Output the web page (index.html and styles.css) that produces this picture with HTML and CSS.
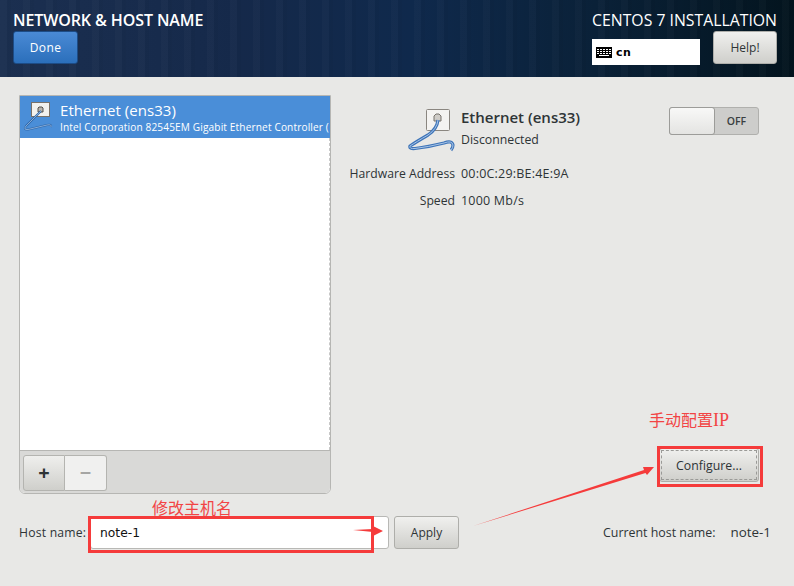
FILE: index.html
```html
<!DOCTYPE html>
<html lang="en">
<head>
<meta charset="utf-8">
<title>Network &amp; Host Name</title>
<link rel="stylesheet" href="styles.css">
</head>
<body>
<div class="page">
  <header class="topbar">
    <div class="top-left">
      <h1 class="spoke-title">NETWORK &amp; HOST NAME</h1>
      <button class="btn-done">Done</button>
    </div>
    <div class="top-right">
      <div class="product">CENTOS 7 INSTALLATION</div>
      <div class="top-controls">
        <div class="layout-box">
          <svg class="kbd" width="16" height="11" viewBox="0 0 16 11"><rect width="16" height="11" fill="#000"/><g fill="#fff"><rect x="1" y="2" width="2" height="1"/><rect x="4" y="2" width="2" height="1"/><rect x="7" y="2" width="2" height="1"/><rect x="10" y="2" width="2" height="1"/><rect x="13" y="2" width="2" height="1"/><rect x="1" y="4" width="2" height="1"/><rect x="4" y="4" width="2" height="1"/><rect x="7" y="4" width="2" height="1"/><rect x="10" y="4" width="2" height="1"/><rect x="13" y="4" width="2" height="1"/><rect x="1" y="6" width="2" height="1"/><rect x="4" y="6" width="2" height="1"/><rect x="7" y="6" width="2" height="1"/><rect x="10" y="6" width="2" height="1"/><rect x="13" y="6" width="2" height="1"/><rect x="3" y="8" width="10" height="1"/></g></svg>
          <span class="layout-name">cn</span>
        </div>
        <button class="btn btn-help">Help!</button>
      </div>
    </div>
  </header>

  <main class="content">
    <div class="columns">
      <section class="device-panel">
        <div class="device-row">
          <svg class="device-icon" width="32" height="32" viewBox="0 0 32 32">
            <rect x="8.5" y="1.5" width="18" height="14" fill="#f2f1ee" stroke="#77716a"/>
            <path d="M15 11V7l1-1h3l1 1v4z" fill="#b9b5ae" stroke="#55504a"/>
            <path d="M18 10L3 25Q0 29 5 28.5L24 24Q29 23 28 26" fill="none" stroke="#2f66a8" stroke-width="2"/>
            <path d="M18 10L3 25Q0 29 5 28.5L24 24Q29 23 28 26" fill="none" stroke="#a8c7ea" stroke-width=".7"/>
          </svg>
          <div class="device-text">
            <div class="device-name">Ethernet (ens33)</div>
            <div class="device-desc">Intel Corporation 82545EM Gigabit Ethernet Controller (</div>
          </div>
        </div>
        <div class="device-list-empty"></div>
        <div class="device-tools">
          <div class="tool-group">
            <button class="tool tool-add">+</button>
            <button class="tool tool-remove">−</button>
          </div>
        </div>
      </section>

      <section class="detail-panel">
        <div class="detail-head">
          <svg class="detail-icon" width="48" height="48" viewBox="0 0 48 48">
            <rect x="18.5" y="2.5" width="23" height="21" rx="1" fill="#f4f3f1" stroke="#8a8680"/>
            <path d="M26 14V9l2-2h3l2 2v5z" fill="#cfccc7" stroke="#77726c"/>
            <path d="M30 13Q29 22 20 28Q8 35 2 39Q1 42 7 41.5Q20 40 36 36Q44 33 45 38Q45 41 43 43" fill="none" stroke="#3e74b8" stroke-width="3.2"/>
            <path d="M30 13Q29 22 20 28Q8 35 2 39Q1 42 7 41.5Q20 40 36 36Q44 33 45 38Q45 41 43 43" fill="none" stroke="#a9c6e8" stroke-width="1"/>
          </svg>
          <div class="detail-title">
            <div class="detail-name">Ethernet (ens33)</div>
            <div class="detail-state">Disconnected</div>
          </div>
          <div class="switch"><span class="switch-knob"></span><span class="switch-label">OFF</span></div>
        </div>
        <dl class="props">
          <dt>Hardware Address</dt><dd>00:0C:29:BE:4E:9A</dd>
          <dt>Speed</dt><dd>1000 Mb/s</dd>
        </dl>
        <div class="detail-actions">
          <button class="btn btn-configure"><span class="focus-ring">Configure...</span></button>
        </div>
      </section>
    </div>

    <div class="host-row">
      <label class="host-label">Host name:</label>
      <input class="host-input" value="note-1">
      <button class="btn btn-apply">Apply</button>
      <div class="current-host"><span>Current host name:</span><span class="current-value">note-1</span></div>
    </div>
  </main>

  <div class="note note-host">修改主机名</div>
  <div class="note note-ip">手动配置<span class="note-latin">IP</span></div>
  <div class="mark mark-host"></div>
  <div class="mark mark-configure"></div>
  <svg class="arrows" width="794" height="586" viewBox="0 0 794 586">
    <polygon points="473,526 644,470 643,467 654,467 647,475 645.5,473" fill="#f53b3b"/>
    <polygon points="353,530 373,529 373,526 383,531 373,536 373,532" fill="#f53b3b"/>
  </svg>
</div>
</body>
</html>
```

FILE: styles.css
```css
* { box-sizing: border-box; }
html, body { margin: 0; padding: 0; }
body { font-family: "Open Sans", "Noto Sans", sans-serif; color: #2e3436; background: #e8e8e6; }
.page { position: relative; width: 794px; height: 586px; overflow: hidden; display: flex; flex-direction: column; }
button { font-family: inherit; margin: 0; }

.topbar {
  height: 77px; flex: none; display: flex; justify-content: space-between;
  padding: 10px 17px 0 13px;
  background:
    repeating-linear-gradient(90deg, rgba(255,255,255,.018) 0 7px, rgba(0,0,0,.03) 7px 11px, rgba(255,255,255,0) 11px 23px),
    linear-gradient(90deg, #1b2f50 0%, #15294a 30%, #0f294c 52%, #0a2138 75%, #03141e 100%);
}
.spoke-title { margin: 0; font-size: 16px; line-height: 21px; font-weight: 600; color: #fff; letter-spacing: -.1px; white-space: nowrap; }
.btn-done {
  display: block; width: 65px; height: 33px; padding: 0;
  border: 1px solid #1d4c86; border-radius: 3px; color: #fff; font-size: 12px; letter-spacing: .4px;
  background: linear-gradient(#4a8ad5, #2b6fbb);
}
.top-right { display: flex; flex-direction: column; align-items: flex-end; }
.product { font-size: 15.8px; line-height: 21px; color: #fff; white-space: nowrap; }
.top-controls { display: flex; align-items: flex-start; gap: 13px; }
.layout-box { width: 108px; height: 26px; margin-top: 8px; background: #fff; display: flex; align-items: center; padding: 1px 0 0 4px; gap: 4px; }
.kbd { flex: none; }
.layout-name { font-family: "DejaVu Sans", sans-serif; font-weight: 700; font-size: 11px; color: #000; letter-spacing: .6px; }
.btn {
  border: 1px solid #aeaeaa; border-radius: 3px; color: #2e3436; font-size: 12px; padding: 0;
  background: linear-gradient(#f0f0ee, #cfcfcb);
}
.btn-help { width: 64px; height: 33px; }

.content { flex: 1; display: flex; flex-direction: column; padding: 18px 23px 0 19px; }
.columns { display: flex; height: 399px; }
.device-panel { width: 312px; flex: none; display: flex; flex-direction: column; border: 1px solid #b6b6b3; border-radius: 0 0 6px 6px; background: #fff; }
.device-row { height: 42px; flex: none; display: flex; align-items: center; gap: 5px; padding-left: 3px; background: #4a8ed8; color: #fff; overflow: hidden; }
.device-icon { flex: none; }
.device-text { white-space: nowrap; min-width: 0; margin-top: -1px; }
.device-name { font-size: 15px; line-height: 20px; letter-spacing: .05px; }
.device-desc { font-size: 10.1px; line-height: 14px; letter-spacing: .14px; }
.device-list-empty { flex: 1; background: #fff; border-right: 1px dashed #c8c8c8; }
.device-tools { height: 43px; flex: none; padding: 4px 3px; background: #d9d9d7; border-top: 1px solid #b6b6b3; border-radius: 0 0 5px 5px; }
.tool-group { display: flex; width: 84px; height: 36px; }
.tool { width: 42px; height: 36px; padding: 0; border: 1px solid #b4b4b0; font-size: 20px; line-height: 1; font-weight: 700; }
.tool-add { border-radius: 3px 0 0 3px; color: #2e3436; background: linear-gradient(#efefed, #cfcfcb); }
.tool-remove { border-left: 0; border-radius: 0 3px 3px 0; color: #a5a5a3; background: #f0f0ef; }

.detail-panel { flex: 1; min-width: 0; display: flex; flex-direction: column; padding-top: 12px; }
.detail-head { display: flex; align-items: flex-start; padding-left: 77px; }
.detail-icon { flex: none; }
.detail-title { margin-left: 5px; width: 208px; }
.detail-name { font-size: 15px; line-height: 20px; font-weight: 600; white-space: nowrap; }
.detail-state { font-size: 12.3px; line-height: 16px; margin-top: 5px; }
.switch { width: 90px; height: 28px; display: flex; border: 1px solid #b0b0ad; border-radius: 3px; background: #cdcdcb; }
.switch-knob { width: 46px; margin: -1px 0 -1px -1px; border: 1px solid #9c9c99; border-radius: 3px; background: linear-gradient(#f8f8f7, #e4e4e2); }
.switch-label { flex: 1; text-align: center; font-size: 10.5px; line-height: 26px; font-weight: 600; color: #3a3f41; }
.props { margin: 11px 0 0; display: grid; grid-template-columns: 124px auto; column-gap: 6px; row-gap: 11px; justify-content: start; font-size: 12.2px; line-height: 16px; }
.props dt { text-align: right; white-space: nowrap; }
.props dd { margin: 0; font-size: 12.5px; letter-spacing: .2px; }
.detail-actions { margin-top: auto; padding: 0 12px 12px 0; display: flex; justify-content: flex-end; }
.btn-configure { width: 100px; height: 34px; padding: 1px; }
.focus-ring { display: flex; align-items: center; justify-content: center; height: 100%; border: 1px dashed #9a9a97; font-size: 12.3px; }

.host-row { display: flex; align-items: center; margin-top: 22px; height: 33px; font-size: 12.4px; }
.host-label { width: 71px; flex: none; font-size: 12.2px; letter-spacing: .2px; white-space: nowrap; }
.host-input { width: 299px; height: 33px; flex: none; border: 1px solid #b8b8b5; border-radius: 3px; background: #fff; padding: 0 0 0 9px; font-family: "DejaVu Sans", sans-serif; font-size: 12.3px; color: #111; outline: 0; }
.btn-apply { width: 65px; height: 33px; margin-left: 5px; flex: none; }
.current-host { margin-left: auto; display: flex; gap: 15px; white-space: nowrap; }
.current-value { font-size: 13.4px; line-height: 17px; }

.note { position: absolute; color: #f24444; font-family: "Noto Sans CJK SC", sans-serif; font-size: 16px; line-height: 20px; white-space: nowrap; }
.note-host { left: 152px; top: 497px; }
.note-ip { left: 649px; top: 409px; }
.note-latin { font-family: "Liberation Serif", serif; font-size: 18px; }
.mark { position: absolute; border: 3px solid #f53b3b; }
.mark-host { left: 88px; top: 516px; width: 286px; height: 37px; }
.mark-configure { left: 657px; top: 446px; width: 106px; height: 41px; }
.arrows { position: absolute; left: 0; top: 0; pointer-events: none; }
```
